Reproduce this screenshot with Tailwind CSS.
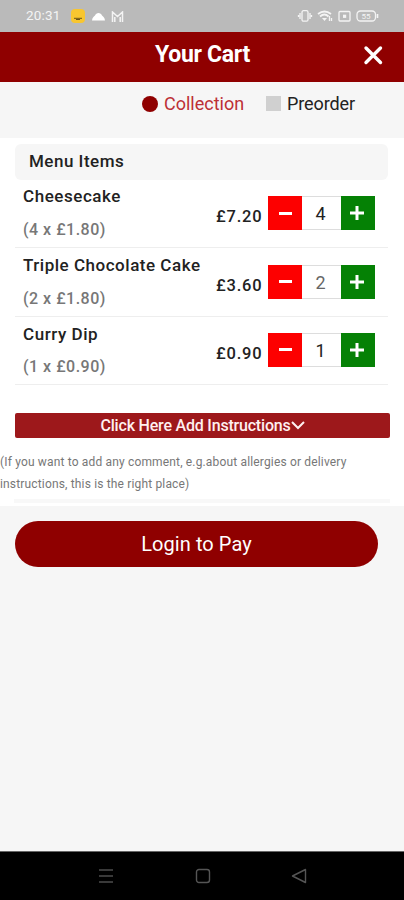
<!DOCTYPE html>
<html lang="en">
<head>
<meta charset="utf-8">
<title>Your Cart</title>
<script src="https://cdn.jsdelivr.net/npm/@tailwindcss/browser@4"></script>
</head>
<body class="w-[404px] h-[900px] overflow-hidden flex flex-col bg-[#f6f6f6] font-['Roboto',sans-serif] text-[#222]">
  <div class="h-8 shrink-0 bg-[#bababa] flex items-center justify-between pl-[26px] pr-[25px] text-[#f4f4f4]">
    <div class="flex items-center">
      <span class="text-[13.500px] leading-none w-[45px] tracking-[0.2px]">20:31</span>
      <svg class="w-[14px] h-[14px]" viewBox="0 0 14 14"><rect width="14" height="14" rx="4" fill="#f8c630"/><path d="M3 9.300h8M5 10.500h4" stroke="#6b5518" stroke-width="1"/></svg>
      <svg class="w-[13px] h-[9px] ml-[7px]" viewBox="0 0 13 9"><path d="M0 8.500C.3 5.500 2 4.500 3 3.500 4 0 9 0 10 3.500c1 1 2.700 2 3 5z" fill="#fff"/></svg>
      <svg class="w-[13px] h-[11px] ml-[6px]" viewBox="0 0 13 11" fill="none" stroke="#f4f4f4"><path d="M1.500 11V1l5 4.500 5-4.500v10M3.800 11V6M9.200 11V6" stroke-width="1.500"/></svg>
    </div>
    <svg class="w-[82px] h-[14px]" viewBox="0 0 82 14" fill="none" stroke="#f4f4f4" stroke-width="1.300">
      <rect x="5" y="1.700" width="6" height="10.500" rx="1.500"/><path d="M3 4v6M13 4v6M1.500 6v2M14.500 6v2"/>
      <path d="M21 5q6.500-5 13 0M23 7.500q4.500-4 8.500 0" stroke-width="1.800"/><path d="M25 9h5L27.500 12z" fill="#f4f4f4" stroke="none"/><path d="M32.500 7v5M34.500 9v3"/>
      <rect x="42" y="2.500" width="11" height="9.500" rx="1"/><rect x="46" y="5.700" width="3.200" height="3.200" fill="#f4f4f4" stroke="none"/>
      <rect x="60" y="2" width="18.500" height="10" rx="3.500"/><path d="M80.500 5v4" stroke-width="1.600"/><text x="64.500" y="10" font-family="Roboto" font-size="8" fill="#f4f4f4" stroke="none">55</text>
    </svg>
  </div>

  <header class="h-[50px] shrink-0 bg-[#8f0000] grid grid-cols-[1fr_auto_1fr] text-white">
    <span></span>
    <h1 class="text-[23px] leading-[45px] font-bold pl-[3px]"><span class="inline-block w-[97px] whitespace-nowrap tracking-[-0.3px]">Your Cart</span></h1>
    <svg class="justify-self-end w-5 h-5 mt-[13px] mr-[21px]" viewBox="0 0 20 20" stroke="#fff" stroke-width="3.400" stroke-linecap="round"><path d="M3 3l14.500 14.500M17.500 3L3 17.500"/></svg>
  </header>

  <div class="h-[56px] shrink-0 flex items-start pl-[142px] pt-[11px] text-lg leading-[22px]">
    <span class="w-4 h-4 rounded-full bg-[#8f0000] mt-[3px]"></span>
    <span class="ml-[6px] w-[102px] text-[#bd3035]">Collection</span>
    <span class="w-[15px] h-[15px] bg-[#d0d0d0] mt-[3px]"></span>
    <span class="ml-[6px] tracking-[-0.1px]">Preorder</span>
  </div>

  <main class="h-[368px] shrink-0 bg-white">
    <div class="pl-[15px] pr-4 pt-[6px]">
      <h2 class="h-[36px] rounded-md bg-[#f6f6f6] pl-[14px] text-[17px] leading-[35px] font-medium tracking-[0.5px]">Menu Items</h2>
      <div class="h-[67.500px] flex border-b border-[#eee] pl-2 pr-[13px]">
        <div class="w-[193px] shrink-0 whitespace-nowrap">
          <div class="text-[17px] leading-[33px] font-medium tracking-[0.550px]">Cheesecake</div>
          <div class="pt-px text-base leading-[31px] font-medium text-[#777] tracking-[0.500px]">(4 x £1.80)</div>
        </div>
        <div class="w-[52px] shrink-0 pt-[26px] leading-[22px] text-[16.500px] font-medium tracking-[0.8px] whitespace-nowrap">£7.20</div>
        <div class="flex mt-[16px] h-[34px] w-[107px]">
          <div class="w-[34px] bg-[#fd0000] grid place-items-center"><span class="w-[13px] h-[3px] bg-white"></span></div>
          <div class="w-[39px] border-y border-[#ddd] text-center text-lg leading-[33px]"><span class="relative -left-px">4</span></div>
          <div class="w-[34px] bg-[#058105] grid place-items-center"><svg class="w-[14px] h-[14px] mr-[2px]" viewBox="0 0 14 14"><path d="M0 7h14M7 0v14" stroke="#fff" stroke-width="3"/></svg></div>
        </div>
      </div>
      <div class="h-[69px] flex border-b border-[#eee] pl-2 pr-[13px]">
        <div class="w-[193px] shrink-0 whitespace-nowrap">
          <div class="text-[17px] leading-[35px] font-medium tracking-[0.520px]">Triple Chocolate Cake</div>
          <div class="text-base leading-[31px] font-medium text-[#777] tracking-[0.500px]">(2 x £1.80)</div>
        </div>
        <div class="w-[52px] shrink-0 pt-[27px] leading-[22px] text-[16.500px] font-medium tracking-[0.8px] whitespace-nowrap">£3.60</div>
        <div class="flex mt-[17px] h-[34px] w-[107px]">
          <div class="w-[34px] bg-[#fd0000] grid place-items-center"><span class="w-[13px] h-[3px] bg-white"></span></div>
          <div class="w-[39px] border-y border-[#ddd] text-center text-lg leading-[33px] text-[#666]"><span class="relative -left-px">2</span></div>
          <div class="w-[34px] bg-[#058105] grid place-items-center"><svg class="w-[14px] h-[14px] mr-[2px]" viewBox="0 0 14 14"><path d="M0 7h14M7 0v14" stroke="#fff" stroke-width="3"/></svg></div>
        </div>
      </div>
      <div class="h-[68.500px] flex border-b border-[#eee] pl-2 pr-[13px]">
        <div class="w-[193px] shrink-0 whitespace-nowrap">
          <div class="text-[17px] leading-[34px] font-medium tracking-[0.550px]">Curry Dip</div>
          <div class="text-base leading-[31px] font-medium text-[#777] tracking-[0.500px]">(1 x £0.90)</div>
        </div>
        <div class="w-[52px] shrink-0 pt-[26px] leading-[22px] text-[16.500px] font-medium tracking-[0.8px] whitespace-nowrap">£0.90</div>
        <div class="flex mt-[16px] h-[34px] w-[107px]">
          <div class="w-[34px] bg-[#fd0000] grid place-items-center"><span class="w-[13px] h-[3px] bg-white"></span></div>
          <div class="w-[39px] border-y border-[#ddd] text-center text-lg leading-[33px]"><span class="relative -left-px">1</span></div>
          <div class="w-[34px] bg-[#058105] grid place-items-center"><svg class="w-[14px] h-[14px] mr-[2px]" viewBox="0 0 14 14"><path d="M0 7h14M7 0v14" stroke="#fff" stroke-width="3"/></svg></div>
        </div>
      </div>
    </div>
    <button class="mt-[28px] ml-[15px] w-[375px] h-[25px] rounded-[2px] bg-[#9d181b] text-[#fff0f0] flex items-center justify-center text-base font-medium">
      <span class="whitespace-nowrap tracking-[-0.200px]">Click Here Add Instructions</span>
      <svg class="w-[14px] h-[9px]" viewBox="0 0 14 9" fill="none" stroke="#fff0f0" stroke-width="2"><path d="M1 1l6 6 6-6"/></svg>
    </button>
    <p class="mt-[14px] text-xs leading-[21.500px] text-[#777] tracking-[0.160px] whitespace-nowrap">(If you want to add any comment, e.g.about allergies or delivery<br>instructions, this is the right place)</p>
    <div class="mt-[4px] mx-[14px] h-[4px] bg-[#f8f8f8]"></div>
  </main>

  <div class="flex-1 pl-[15px] pt-[15px]">
    <button class="block w-[363px] h-[46px] rounded-full bg-[#8f0000] text-white text-xl tracking-[0.080px]">Login to Pay</button>
  </div>

  <nav class="h-[49px] shrink-0 bg-black border-t border-[#666] flex items-center justify-between pl-[98px] pr-[97px]">
    <svg class="w-4 h-4" viewBox="0 0 16 16" stroke="#4c4c4c" stroke-width="1.700"><path d="M1 2h14M1 8h14M1 14h14"/></svg>
    <svg class="w-4 h-4" viewBox="0 0 16 16" fill="none" stroke="#555" stroke-width="1.400"><rect x="1.500" y="1.500" width="13" height="13" rx="2.500"/></svg>
    <svg class="w-4 h-4" viewBox="0 0 16 16" fill="none" stroke="#555" stroke-width="1.400" stroke-linejoin="round"><path d="M1.500 8L14.500 1.500v13z"/></svg>
  </nav>
</body>
</html>
